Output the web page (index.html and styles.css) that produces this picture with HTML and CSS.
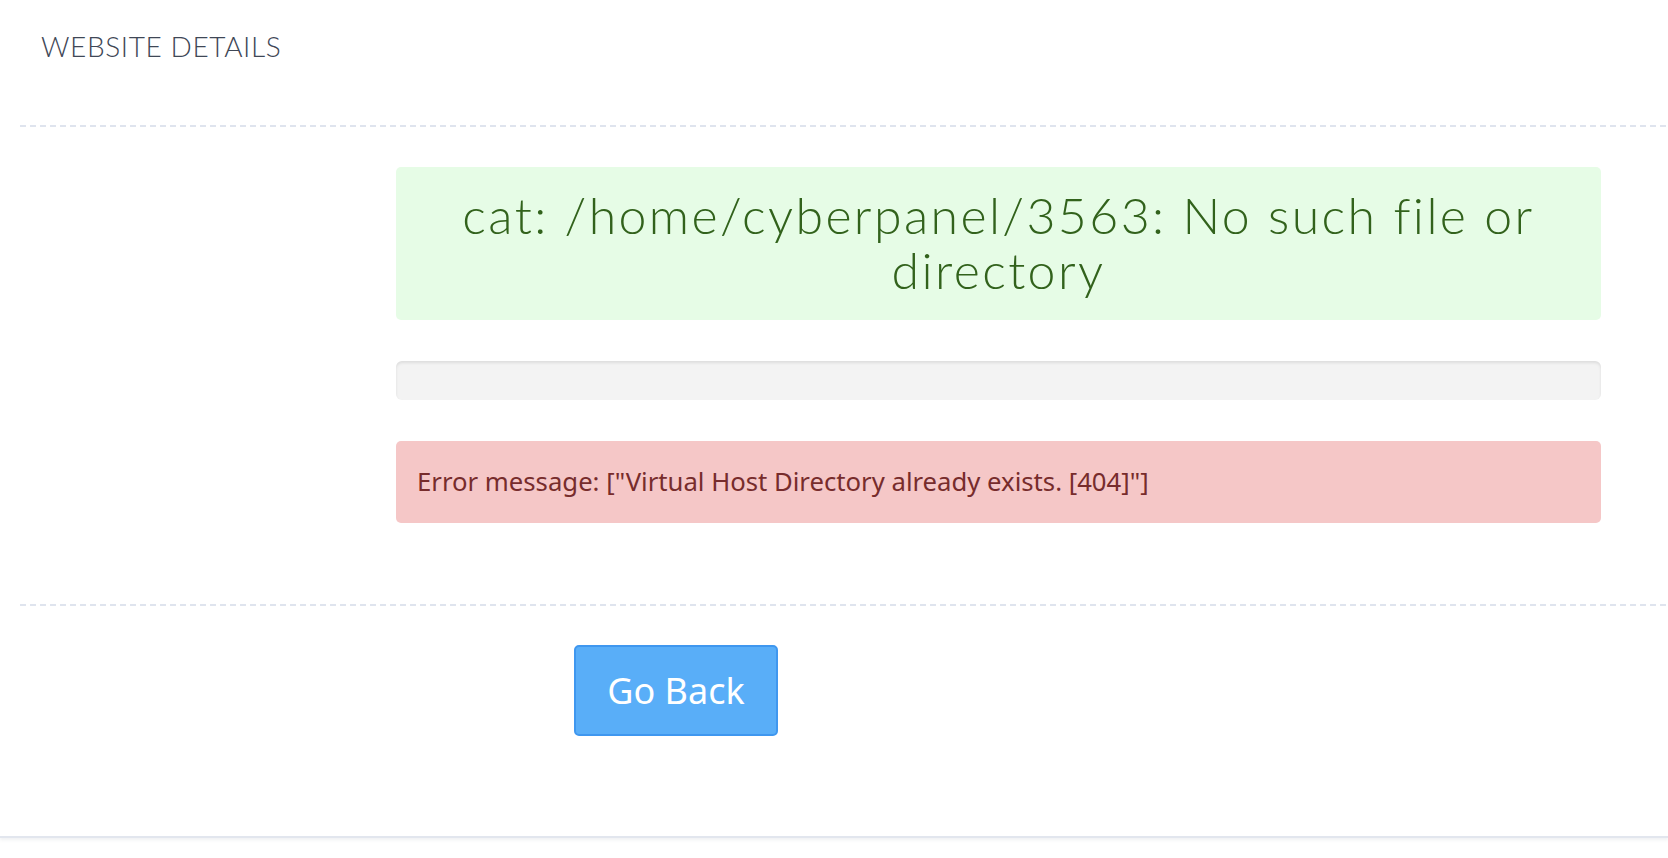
FILE: index.html
```html
<!DOCTYPE html>
<html lang="en">
<head>
<meta charset="utf-8">
<title>Website Details</title>
<link rel="stylesheet" href="styles.css">
</head>
<body>
<div class="panel">
  <h3 class="panel-title">WEBSITE DETAILS</h3>
  <div class="divider"></div>
  <div class="content">
    <div class="alert-success">
      <h2 class="status-text">cat: /home/cyberpanel/3563: No such file or directory</h2>
    </div>
    <div class="progress"></div>
    <div class="alert-danger">
      <p>Error message: ["Virtual Host Directory already exists. [404]"]</p>
    </div>
  </div>
  <div class="divider divider-bottom"></div>
  <div class="actions">
    <button class="btn-primary" type="button">Go Back</button>
  </div>
</div>
</body>
</html>
```

FILE: styles.css
```css
html, body {
  margin: 0;
  padding: 0;
  background: #ffffff;
}

body {
  font-family: "Noto Sans", "Open Sans", sans-serif;
  width: 1668px;
  height: 858px;
  overflow: hidden;
}

.panel {
  height: 838px;
  box-sizing: border-box;
  border-bottom: 2px solid #e2e6ee;
  box-shadow: 0 2px 3px rgba(120, 130, 150, 0.12);
}

.panel-title {
  margin: 0;
  padding: 30px 0 0 41px;
  font-family: "Lato", "Open Sans", sans-serif;
  font-weight: 300;
  font-size: 28px;
  line-height: 1.2;
  letter-spacing: 0.6px;
  color: #3f4756;
  height: 64px;
}

.divider {
  margin: 31px 0 0 20px;
  height: 2px;
  background: repeating-linear-gradient(to right, #dfe4ee 0 6px, transparent 6px 10px);
}

.content {
  padding: 40px 67px 0 396px;
}

.alert-success {
  background: #e6fce6;
  border-radius: 5px;
  padding: 21px 20px 20px;
  height: 153px;
  box-sizing: border-box;
}

.status-text {
  margin: 0;
  text-align: center;
  font-family: "Lato", "Open Sans", sans-serif;
  font-weight: 300;
  font-size: 50px;
  line-height: 55px;
  letter-spacing: 2.4px;
  color: #32621c;
}

.progress {
  margin-top: 41px;
  height: 39px;
  background: #f3f3f3;
  border-radius: 6px;
  box-shadow: inset 0 2px 3px rgba(0, 0, 0, 0.09);
}

.alert-danger {
  margin-top: 41px;
  background: #f5c7c7;
  border-radius: 5px;
  padding: 24px 21px;
  height: 82px;
  box-sizing: border-box;
}

.alert-danger p {
  margin: 0;
  font-size: 25.7px;
  line-height: 34px;
  color: #772c2c;
}

.divider-bottom {
  margin-top: 81px;
}

.actions {
  padding: 39px 0 0 574px;
}

.btn-primary {
  width: 204px;
  height: 91px;
  box-sizing: border-box;
  background: #59aef8;
  border: 2px solid #3f97ef;
  border-radius: 5px;
  color: #ffffff;
  font-family: "Noto Sans", "Open Sans", sans-serif;
  font-size: 36px;
  padding: 0;
  display: flex;
  align-items: center;
  justify-content: center;
  cursor: pointer;
}
```
